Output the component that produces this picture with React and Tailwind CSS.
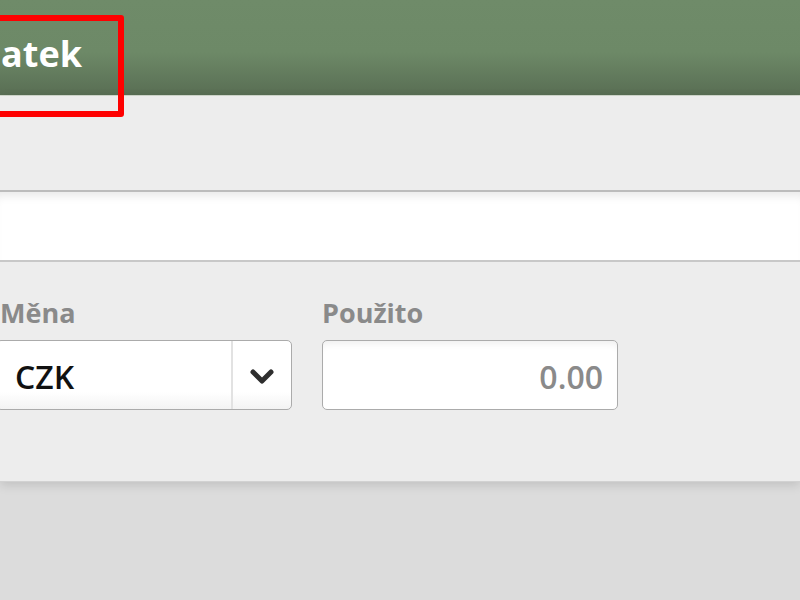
import React from "react";

export default function App() {
  return (
    <div className="relative w-[800px] h-[600px] overflow-hidden bg-[#dcdcdc] font-['Open_Sans',sans-serif]">
      {/* Header */}
      <div className="h-[96px] border-b border-[#d3dacf] bg-[linear-gradient(to_bottom,#6f8b69_0%,#6d8967_55%,#596e54_100%)]">
        <div className="w-[82px] flex justify-end whitespace-nowrap pt-[36px]">
          <span className="text-[36px] leading-none font-bold text-white">Doplatek</span>
        </div>
      </div>

      {/* Panel */}
      <div className="relative z-10 bg-[#ededed] h-[386px] shadow-[0_3px_10px_rgba(0,0,0,0.13)] border-b border-[#d2d2d2]">
        <div className="h-[94px]" />
        <div className="h-[72px] bg-white border-t-2 border-b-2 border-t-[#bcbcbc] border-b-[#c8c8c8] shadow-[inset_0_10px_10px_-6px_rgba(0,0,0,0.09)]" />
        <div className="flex gap-[30px] pt-[37px] -ml-1">
          <div className="flex flex-col gap-[14px]">
            <div className="pl-1 text-[27px] leading-none font-bold text-[#8a8a8a]">Měna</div>
            <div className="flex w-[296px] h-[70px] rounded-[5px] border border-[#ababab] bg-[linear-gradient(to_bottom,#ffffff_0%,#ffffff_75%,#f3f3f3_100%)]">
              <div className="flex-1 flex items-center pl-[18px] pt-[4px] text-[32px] font-semibold text-[#111111]">CZK</div>
              <div className="w-[2px] bg-[#e2e2e2]" />
              <div className="w-[58px] flex items-center justify-center pt-[2px]">
                <svg width="26" height="17" viewBox="0 0 26 17">
                  <polyline points="4,4 13,13 22,4" fill="none" stroke="#2e2e2e" strokeWidth="5" strokeLinecap="round" strokeLinejoin="round" />
                </svg>
              </div>
            </div>
          </div>
          <div className="flex flex-col gap-[14px]">
            <div className="text-[27px] leading-none font-bold text-[#8a8a8a]">Použito</div>
            <div className="flex items-center justify-end w-[296px] h-[70px] rounded-[5px] border border-[#ababab] bg-white shadow-[inset_0_8px_8px_-6px_rgba(0,0,0,0.08)] pr-[14px] pt-[4px] text-[32px] font-semibold text-[#8a8a8a]">
              0.00
            </div>
          </div>
        </div>
      </div>

      {/* Red annotation */}
      <div className="absolute z-20 left-[-10px] top-[15px] w-[134px] h-[102px] border-[6px] border-[#fe0000] rounded-[3px]" />
    </div>
  );
}
